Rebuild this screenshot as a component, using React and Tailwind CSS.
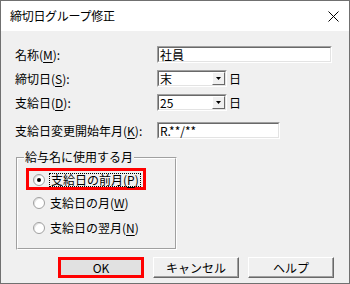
const font = { fontFamily: '"Noto Sans CJK JP", "Liberation Sans", sans-serif' };

const Mn = ({ children }) => <span className="underline underline-offset-2">{children}</span>;

const Sunken = ({ className, children }) => (
  <div className={`border border-t-[#a0a0a0] border-l-[#a0a0a0] border-b-white border-r-white ${className}`}>
    <div className="flex h-full items-center border border-t-[#696969] border-l-[#696969] border-b-[#e3e3e3] border-r-[#e3e3e3] bg-white">
      {children}
    </div>
  </div>
);

const Combo = ({ value }) => (
  <div className="flex items-center">
    <Sunken className="w-[70px] h-[17px]">
      <span className="flex-1 pl-[1px] text-[12px] leading-none">{value}</span>
      <div className="flex h-full w-[13px] items-center justify-center border border-t-white border-l-white border-b-[#696969] border-r-[#696969] bg-[#f0f0f0]">
        <svg width="5" height="3" viewBox="0 0 5 3">
          <path d="M0 0h5L2.5 3z" fill="#000" />
        </svg>
      </div>
    </Sunken>
    <span className="ml-[2px] text-[12px] leading-none">日</span>
  </div>
);

const Radio = ({ checked }) => (
  <span className="flex h-[12px] w-[12px] items-center justify-center rounded-full border border-[#a0a0a0] bg-white shadow-[inset_1px_1px_0_#e3e3e3]">
    {checked && <span className="h-[4px] w-[4px] rounded-full bg-black" />}
  </span>
);

const Row = ({ label, children, className = "" }) => (
  <div className={`flex items-center ${className}`}>
    <div className="w-[142px] text-[12px] leading-none">{label}</div>
    {children}
  </div>
);

export default function App() {
  return (
    <div className="flex h-[284px] w-[350px] flex-col border border-[#707070] bg-[#f0f0f0] text-black" style={font}>
      <div className="flex h-[30px] items-center justify-between bg-white pl-[9px] pr-[10px]">
        <span className="text-[12px] leading-none tracking-[-0.3px]">締切日グループ修正</span>
        <svg width="11" height="11" viewBox="0 0 11 11">
          <path d="M0.5 0.5L10.5 10.5M10.5 0.5L0.5 10.5" stroke="#000" strokeWidth="1" />
        </svg>
      </div>

      <div className="flex flex-1 flex-col pl-[14px] pt-[15px]">
        <Row label={<>名称(<Mn>M</Mn>):</>}>
          <Sunken className="w-[175px] h-[17px]">
            <span className="pl-[1px] text-[12px] leading-none">社員</span>
          </Sunken>
        </Row>
        <Row className="mt-[7px]" label={<>締切日(<Mn>S</Mn>):</>}>
          <Combo value="末" />
        </Row>
        <Row className="mt-[7px]" label={<>支給日(<Mn>D</Mn>):</>}>
          <Combo value="25" />
        </Row>
        <Row className="mt-[11px]" label={<>支給日変更開始年月(<Mn>K</Mn>):</>}>
          <Sunken className="w-[123px] h-[17px]">
            <span className="pl-[1px] text-[12px] leading-none">R.**/**</span>
          </Sunken>
        </Row>

        <div className="relative ml-[1px] mt-[18px] h-[93px] w-[161px] border border-t-[#a0a0a0] border-l-[#a0a0a0] border-b-white border-r-white">
          <div className="h-full w-full border border-t-white border-l-white border-b-[#a0a0a0] border-r-[#a0a0a0]">
            <div className="ml-[8px] mt-[9px] flex h-[22px] w-[120px] items-center border-[3px] border-[#ff0000] pl-[4px] pt-[2px]">
              <Radio checked />
              <span className="ml-[4px] border border-dotted border-black px-[1px] text-[12px] leading-[12px]">
                支給日の前月(<Mn>P</Mn>)
              </span>
            </div>
            <div className="ml-[15px] mt-[7px] flex items-center">
              <Radio />
              <span className="ml-[5px] text-[12px] leading-none">支給日の月(<Mn>W</Mn>)</span>
            </div>
            <div className="ml-[15px] mt-[13px] flex items-center">
              <Radio />
              <span className="ml-[5px] text-[12px] leading-none">支給日の翌月(<Mn>N</Mn>)</span>
            </div>
          </div>
          <span className="absolute left-[7px] top-[-8px] bg-[#f0f0f0] px-[1px] text-[12px] leading-[14px]">
            給与名に使用する月
          </span>
        </div>

        <div className="mt-[7px] flex justify-end gap-[9px] pr-[15px]">
          <button className="h-[21px] w-[86px] border-[3px] border-[#ff0000] bg-[#e1e1e1] text-[12px] font-normal leading-none">
            OK
          </button>
          <button className="h-[21px] w-[86px] border border-t-white border-l-white border-b-[#696969] border-r-[#696969] bg-[#f0f0f0] text-[12px] leading-none shadow-[inset_-1px_-1px_0_#a0a0a0]">
            キャンセル
          </button>
          <button className="h-[21px] w-[86px] border border-t-white border-l-white border-b-[#696969] border-r-[#696969] bg-[#f0f0f0] text-[12px] leading-none shadow-[inset_-1px_-1px_0_#a0a0a0]">
            ヘルプ
          </button>
        </div>
      </div>
    </div>
  );
}
